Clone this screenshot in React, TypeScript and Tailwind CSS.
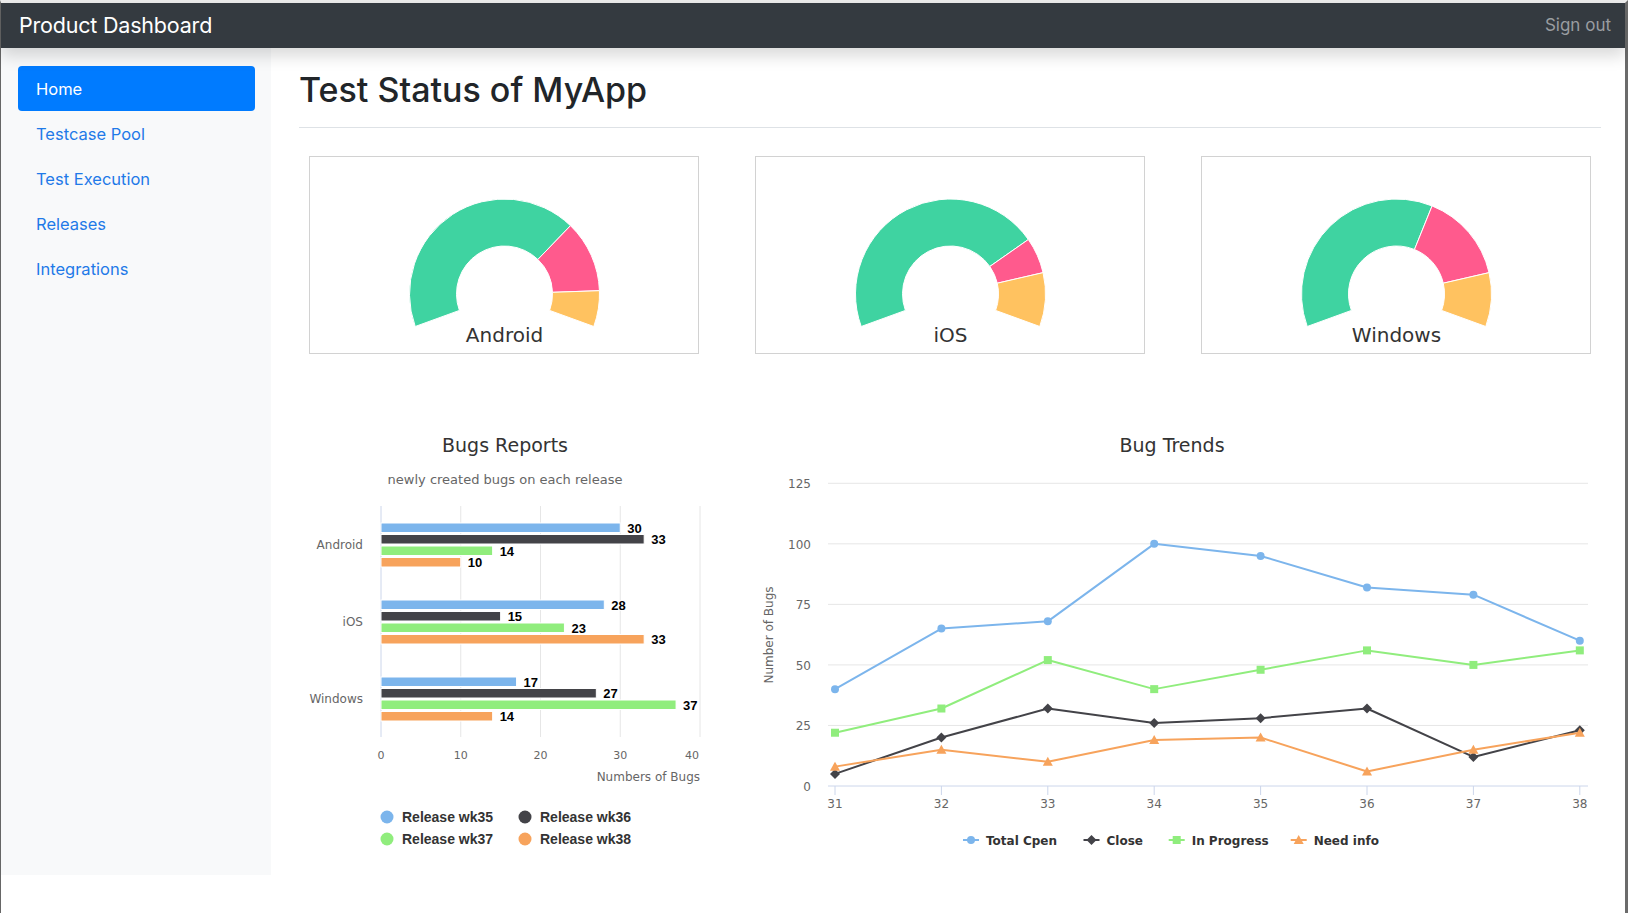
import React from "react";

const CHART_FONT = '"DejaVu Sans", Verdana, sans-serif';
const BOLD_FONT = '"Liberation Sans", Arial, sans-serif';

const gaugeColors = ["#3fd3a1", "#ff5a8d", "#ffc260"];

const gauges = [
  { name: "Android", parts: [70, 20, 10] },
  { name: "iOS", parts: [75, 10, 15] },
  { name: "Windows", parts: [60, 25, 15] },
];

const navItems = ["Home", "Testcase Pool", "Test Execution", "Releases", "Integrations"];

const platforms = ["Android", "iOS", "Windows"];

const bugSeries = [
  { name: "Release wk35", color: "#7cb5ec", data: [30, 28, 17] },
  { name: "Release wk36", color: "#434348", data: [33, 15, 27] },
  { name: "Release wk37", color: "#90ed7d", data: [14, 23, 37] },
  { name: "Release wk38", color: "#f7a35c", data: [10, 33, 14] },
];

const trendSeries = [
  { name: "Total Cpen", color: "#7cb5ec", marker: "circle", data: [40, 65, 68, 100, 95, 82, 79, 60] },
  { name: "Close", color: "#434348", marker: "diamond", data: [5, 20, 32, 26, 28, 32, 12, 23] },
  { name: "In Progress", color: "#90ed7d", marker: "square", data: [22, 32, 52, 40, 48, 56, 50, 56] },
  { name: "Need info", color: "#f7a35c", marker: "triangle", data: [8, 15, 10, 19, 20, 6, 15, 22] },
];

// angle in degrees, clockwise from straight up
function pt(cx: number, cy: number, r: number, a: number) {
  const rad = (a * Math.PI) / 180;
  return [cx + r * Math.sin(rad), cy - r * Math.cos(rad)];
}

function slice(cx: number, cy: number, r: number, ri: number, a1: number, a2: number) {
  const [x1, y1] = pt(cx, cy, r, a1);
  const [x2, y2] = pt(cx, cy, r, a2);
  const [x3, y3] = pt(cx, cy, ri, a2);
  const [x4, y4] = pt(cx, cy, ri, a1);
  const large = a2 - a1 > 180 ? 1 : 0;
  return `M${x1} ${y1} A${r} ${r} 0 ${large} 1 ${x2} ${y2} L${x3} ${y3} A${ri} ${ri} 0 ${large} 0 ${x4} ${y4} Z`;
}

function GaugeCard({ name, parts }: { name: string; parts: number[] }) {
  let start = -110;
  return (
    <div className="w-[390px] h-[198px] border border-[#d2d2d2] bg-white">
      <svg width="388" height="196" viewBox="0 0 388 196">
        {parts.map((p, i) => {
          const a1 = start;
          const a2 = start + (p / 100) * 220;
          start = a2;
          return (
            <path
              key={i}
              d={slice(194.5, 137, 95, 48, a1, a2)}
              fill={gaugeColors[i]}
              stroke="#ffffff"
              strokeWidth="1"
            />
          );
        })}
        <text
          x="194.5"
          y="185"
          textAnchor="middle"
          fontSize="20"
          fill="#333333"
          style={{ fontFamily: CHART_FONT }}
        >
          {name}
        </text>
      </svg>
    </div>
  );
}

function BugsReportChart() {
  const x0 = 82;
  const unit = 319 / 40;
  const top = 101;
  const band = 77;
  return (
    <svg width="441" height="470" viewBox="0 0 441 470" style={{ fontFamily: CHART_FONT }}>
      <text x="206" y="47" textAnchor="middle" fontSize="19" fill="#333333">
        Bugs Reports
      </text>
      <text x="206" y="79" textAnchor="middle" fontSize="13" fill="#666666">
        newly created bugs on each release
      </text>

      {[1, 2, 3, 4].map((k) => (
        <line
          key={k}
          x1={x0 + k * 10 * unit}
          x2={x0 + k * 10 * unit}
          y1={top}
          y2={top + band * 3}
          stroke="#e6e6e6"
          strokeWidth="1"
        />
      ))}
      <line x1={x0} x2={x0} y1={top} y2={top + band * 3} stroke="#ccd6eb" strokeWidth="1" />

      {platforms.map((p, c) => (
        <text key={p} x="64" y={top + band * c + 43} textAnchor="end" fontSize="12" fill="#666666">
          {p}
        </text>
      ))}

      {platforms.map((p, c) =>
        bugSeries.map((s, i) => {
          const v = s.data[c];
          const y = top + band * c + 17 + i * 11.5;
          const w = v * unit;
          return (
            <g key={p + s.name}>
              <rect x={x0} y={y} width={w} height="9.5" fill={s.color} stroke="#ffffff" strokeWidth="1" />
              <text
                x={x0 + w + 7}
                y={y + 9.5}
                fontSize="13"
                fontWeight="bold"
                fill="#000000"
                stroke="#ffffff"
                strokeWidth="2"
                strokeLinejoin="round"
                style={{ fontFamily: BOLD_FONT, paintOrder: "stroke" }}
              >
                {v}
              </text>
            </g>
          );
        })
      )}

      {[0, 10, 20, 30, 40].map((t) => (
        <text
          key={t}
          x={t === 40 ? x0 + 40 * unit - 1 : x0 + t * unit}
          y="354"
          textAnchor={t === 40 ? "end" : "middle"}
          fontSize="11"
          fill="#666666"
        >
          {t}
        </text>
      ))}
      <text x={x0 + 40 * unit} y="376" textAnchor="end" fontSize="12" fill="#666666">
        Numbers of Bugs
      </text>

      {bugSeries.map((s, i) => {
        const cx = i % 2 === 0 ? 88 : 226;
        const cy = i < 2 ? 412 : 434;
        return (
          <g key={s.name}>
            <circle cx={cx} cy={cy} r="6.5" fill={s.color} />
            <text
              x={cx + 15}
              y={cy + 5}
              fontSize="14"
              fontWeight="bold"
              fill="#333333"
              style={{ fontFamily: BOLD_FONT }}
            >
              {s.name}
            </text>
          </g>
        );
      })}
    </svg>
  );
}

function Marker({ kind, x, y, color }: { kind: string; x: number; y: number; color: string }) {
  if (kind === "circle") return <circle cx={x} cy={y} r="4" fill={color} />;
  if (kind === "diamond")
    return <polygon points={`${x},${y - 5} ${x + 5},${y} ${x},${y + 5} ${x - 5},${y}`} fill={color} />;
  if (kind === "square") return <rect x={x - 4} y={y - 4} width="8" height="8" fill={color} />;
  return <polygon points={`${x},${y - 5} ${x + 5},${y + 4} ${x - 5},${y + 4}`} fill={color} />;
}

function BugTrendsChart() {
  const left = 88;
  const right = 848;
  const base = 381;
  const perUnit = 302.7 / 125;
  const cat = (i: number) => 95 + i * 106.4;
  const yv = (v: number) => base - v * perUnit;
  const legendX = [231, 351.5, 436.7, 558.7];

  return (
    <svg width="860" height="470" viewBox="0 0 860 470" style={{ fontFamily: CHART_FONT }}>
      <text x="432" y="47" textAnchor="middle" fontSize="19" fill="#333333">
        Bug Trends
      </text>

      {[25, 50, 75, 100, 125].map((t) => (
        <line key={t} x1={left} x2={right} y1={yv(t)} y2={yv(t)} stroke="#e6e6e6" strokeWidth="1" />
      ))}
      <line x1={left} x2={right} y1={base} y2={base} stroke="#ccd6eb" strokeWidth="1" />
      {[0, 1, 2, 3, 4, 5, 6, 7].map((i) => (
        <line key={i} x1={cat(i)} x2={cat(i)} y1={base} y2={base + 9} stroke="#ccd6eb" strokeWidth="1" />
      ))}

      {[0, 25, 50, 75, 100, 125].map((t) => (
        <text key={t} x="71" y={yv(t) + 5} textAnchor="end" fontSize="12" fill="#666666">
          {t}
        </text>
      ))}
      {[31, 32, 33, 34, 35, 36, 37, 38].map((w, i) => (
        <text key={w} x={cat(i)} y="403" textAnchor="middle" fontSize="12" fill="#666666">
          {w}
        </text>
      ))}
      <text
        x="0"
        y="0"
        transform="translate(33 230) rotate(-90)"
        textAnchor="middle"
        fontSize="12"
        fill="#666666"
      >
        Number of Bugs
      </text>

      {trendSeries.map((s) => (
        <g key={s.name}>
          <polyline
            points={s.data.map((v, i) => `${cat(i)},${yv(v)}`).join(" ")}
            fill="none"
            stroke={s.color}
            strokeWidth="2"
            strokeLinejoin="round"
          />
          {s.data.map((v, i) => (
            <Marker key={i} kind={s.marker} x={cat(i)} y={yv(v)} color={s.color} />
          ))}
        </g>
      ))}

      {trendSeries.map((s, i) => {
        const cx = legendX[i];
        return (
          <g key={s.name}>
            <line x1={cx - 8} x2={cx + 8} y1="435" y2="435" stroke={s.color} strokeWidth="2" />
            <Marker kind={s.marker} x={cx} y={435} color={s.color} />
            <text x={cx + 15} y="439.5" fontSize="12" fontWeight="bold" fill="#333333">
              {s.name}
            </text>
          </g>
        );
      })}
    </svg>
  );
}

export default function App() {
  return (
    <div
      className="w-[1628px] min-h-[913px] bg-white border-t-[3px] border-t-[#ececec] border-l border-l-[#666666] border-r-[3px] border-r-[#6b6b6b]"
      style={{ fontFamily: 'Inter, "Liberation Sans", Arial, sans-serif' }}
    >
      <nav className="relative z-10 h-[45px] bg-[#343a40] flex items-center justify-between pl-[18px] pr-[14px] shadow-[0_8px_16px_rgba(0,0,0,0.15)]">
        <span className="text-white text-[21.5px] tracking-[-0.2px]">Product Dashboard</span>
        <span className="text-[#9a9da1] text-[17px]">Sign out</span>
      </nav>

      <div className="flex">
        <aside className="w-[270px] shrink-0 bg-[#f8f9fa] pt-[18px]">
          <ul className="flex flex-col">
            {navItems.map((item, i) => (
              <li key={item}>
                <a
                  className={
                    i === 0
                      ? "ml-[17px] w-[237px] h-[45px] flex items-center pl-[18px] pt-[1px] rounded bg-[#007bff] text-white text-[16.5px]"
                      : "ml-[17px] w-[237px] h-[45px] flex items-center pl-[18px] pt-[1px] text-[#1f7ae8] text-[16.5px]"
                  }
                >
                  {item}
                </a>
              </li>
            ))}
          </ul>
        </aside>

        <main className="flex-1 pl-[28px] pr-[24px]">
          <div className="pt-[21px] pb-[16px] border-b border-[#dee2e6]">
            <h1 className="text-[34px] leading-[42px] font-medium text-[#212529]">Test Status of MyApp</h1>
          </div>

          <div className="mt-[28px] px-[10px] flex justify-between">
            {gauges.map((g) => (
              <GaugeCard key={g.name} name={g.name} parts={g.parts} />
            ))}
          </div>

          <div className="mt-[51px] flex">
            <div className="w-[441px] shrink-0">
              <BugsReportChart />
            </div>
            <div className="flex-1">
              <BugTrendsChart />
            </div>
          </div>
        </main>
      </div>
    </div>
  );
}
